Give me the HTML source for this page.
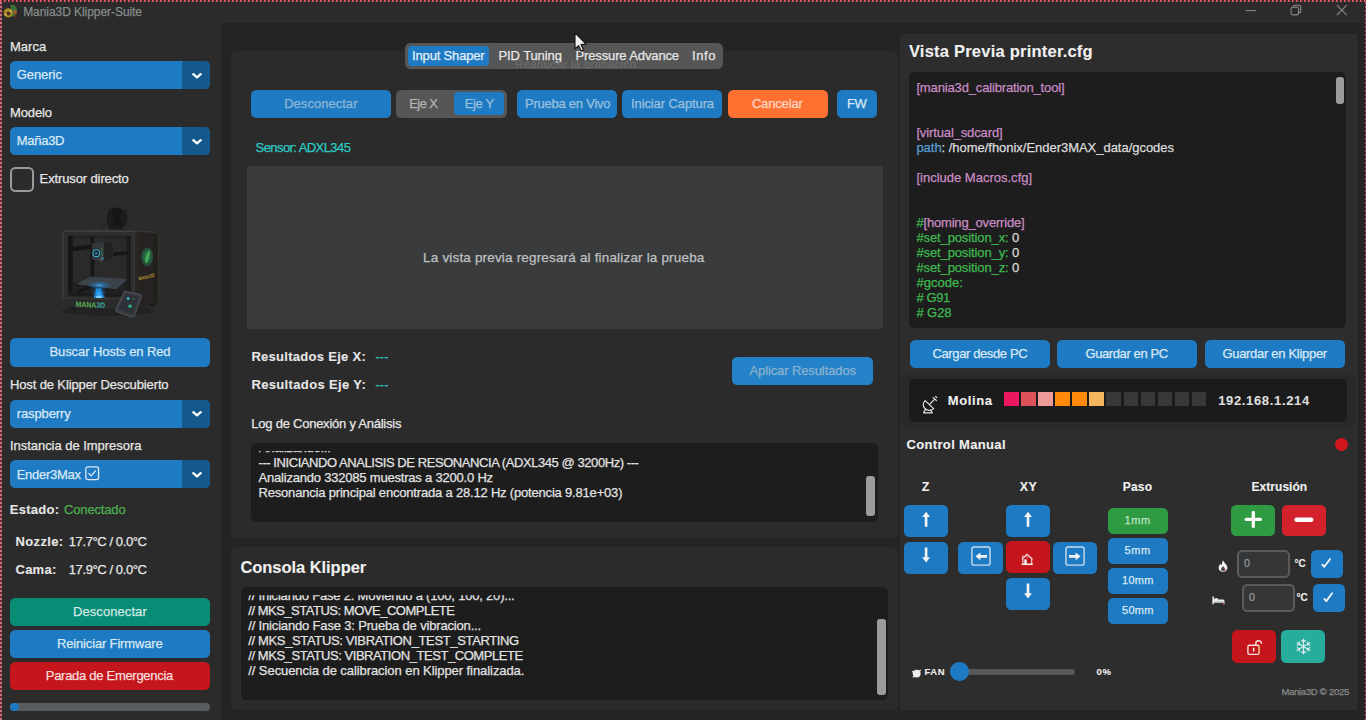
<!DOCTYPE html>
<html lang="es"><head><meta charset="utf-8"><title>Mania3D Klipper-Suite</title>
<style>
html,body{margin:0;padding:0;}
body{width:1366px;height:720px;overflow:hidden;background:#2b2b2b;position:relative;font-family:"Liberation Sans",sans-serif;}
.b{position:absolute;}
.t{position:absolute;white-space:nowrap;line-height:20px;height:20px;}
svg{position:absolute;overflow:visible;}
.t{-webkit-text-stroke:0.25px currentColor;}
</style></head><body>
<div class="b" style="left:222px;top:22.5px;width:1144px;height:697.5px;background:#242424;"></div>
<div class="b" style="left:231px;top:51px;width:667px;height:487px;background:#2b2b2b;border-radius:5.3px;"></div>
<div class="b" style="left:231px;top:547px;width:667px;height:163px;background:#2b2b2b;border-radius:5.3px;"></div>
<div class="b" style="left:899.5px;top:33.5px;width:458px;height:676.5px;background:#2d2d2d;border-radius:4px;"></div>
<div class="b" style="left:10px;top:61px;width:200px;height:28px;background:#1e7bc3;border-radius:5.3px;"></div>
<div class="b" style="left:182px;top:61px;width:28px;height:28px;background:#14598c;border-radius:0 6px 6px 0;"></div>
<div class="b" style="left:10px;top:127px;width:200px;height:28px;background:#1e7bc3;border-radius:5.3px;"></div>
<div class="b" style="left:182px;top:127px;width:28px;height:28px;background:#14598c;border-radius:0 6px 6px 0;"></div>
<div class="b" style="left:10px;top:167px;width:24px;height:25px;background:transparent;border-radius:5.3px;box-sizing:border-box;border:2.5px solid #9a9a9a;"></div>
<div class="b" style="left:10px;top:338px;width:200px;height:28.5px;background:#1e7bc3;border-radius:5.3px;"></div>
<div class="b" style="left:10px;top:400px;width:200px;height:27.5px;background:#1e7bc3;border-radius:5.3px;"></div>
<div class="b" style="left:182px;top:400px;width:28px;height:27.5px;background:#14598c;border-radius:0 6px 6px 0;"></div>
<div class="b" style="left:10px;top:460.4px;width:200px;height:27.8px;background:#1e7bc3;border-radius:5.3px;"></div>
<div class="b" style="left:182px;top:460.4px;width:28px;height:27.8px;background:#14598c;border-radius:0 6px 6px 0;"></div>
<div class="b" style="left:10px;top:598px;width:200px;height:28px;background:#088c76;border-radius:5.3px;"></div>
<div class="b" style="left:10px;top:629.7px;width:200px;height:28px;background:#1e7bc3;border-radius:5.3px;"></div>
<div class="b" style="left:10px;top:661.6px;width:200px;height:28.1px;background:#c4161c;border-radius:5.3px;"></div>
<div class="b" style="left:10px;top:703px;width:200px;height:8.2px;background:#595c5e;border-radius:4px;"></div>
<div class="b" style="left:10px;top:703px;width:8.7px;height:8.2px;background:#1e7bc3;border-radius:4px;"></div>
<div class="b" style="left:405.4px;top:43.3px;width:317.2px;height:25.7px;background:#565656;border-radius:5.3px;"></div>
<div class="b" style="left:408px;top:45.8px;width:80.7px;height:20.2px;background:#1e7bc3;border-radius:4px;"></div>
<div class="b" style="left:251px;top:90px;width:140.3px;height:28px;background:#1e7bc3;border-radius:5.3px;"></div>
<div class="b" style="left:396px;top:90px;width:110.7px;height:28px;background:#565656;border-radius:5.3px;"></div>
<div class="b" style="left:454px;top:92.4px;width:50px;height:23px;background:#1e7bc3;border-radius:4px;"></div>
<div class="b" style="left:517.3px;top:90px;width:100.1px;height:28px;background:#1e7bc3;border-radius:5.3px;"></div>
<div class="b" style="left:622px;top:90px;width:100.3px;height:28px;background:#1e7bc3;border-radius:5.3px;"></div>
<div class="b" style="left:727.5px;top:90px;width:100.2px;height:28px;background:#ff7031;border-radius:5.3px;"></div>
<div class="b" style="left:837.4px;top:90px;width:40.1px;height:28px;background:#1e7bc3;border-radius:5.3px;"></div>
<div class="b" style="left:246.7px;top:166.4px;width:636.3px;height:162.3px;background:#3a3b3c;border-radius:3px;"></div>
<div class="b" style="left:732.4px;top:357.1px;width:140.2px;height:28.1px;background:#2382c8;border-radius:5.3px;"></div>
<div class="b" style="left:251px;top:442.5px;width:626.5px;height:79.5px;background:#1d1d1d;border-radius:5.3px;"></div>
<div class="b" style="left:866px;top:476.3px;width:8.8px;height:40px;background:#9c9c9c;border-radius:3px;"></div>
<div class="b" style="left:240.5px;top:587px;width:647.8px;height:113px;background:#1d1d1d;border-radius:5.3px;"></div>
<div class="b" style="left:877.2px;top:619px;width:8.4px;height:76px;background:#9c9c9c;border-radius:3px;"></div>
<div class="b" style="left:909.3px;top:71.8px;width:436.7px;height:256.2px;background:#1d1d1d;border-radius:5.3px;"></div>
<div class="b" style="left:1335.7px;top:76.7px;width:8.3px;height:27.3px;background:#9c9c9c;border-radius:3px;"></div>
<div class="b" style="left:909.6px;top:340.2px;width:140.6px;height:28.1px;background:#1e7bc3;border-radius:5.3px;"></div>
<div class="b" style="left:1056.5px;top:340.2px;width:140.3px;height:28.1px;background:#1e7bc3;border-radius:5.3px;"></div>
<div class="b" style="left:1204.5px;top:340.2px;width:140.3px;height:28.1px;background:#1e7bc3;border-radius:5.3px;"></div>
<div class="b" style="left:901px;top:373.8px;width:455px;height:53.5px;background:#292929;border-radius:5px;"></div>
<div class="b" style="left:908.8px;top:378.6px;width:438px;height:43.8px;background:#1b1b1b;border-radius:5.3px;"></div>
<div class="b" style="left:1004.3px;top:392.4px;width:14.3px;height:14.1px;background:#ec1761;"></div>
<div class="b" style="left:1021.33px;top:392.4px;width:14.3px;height:14.1px;background:#dd5259;"></div>
<div class="b" style="left:1038.36px;top:392.4px;width:14.3px;height:14.1px;background:#ee9a98;"></div>
<div class="b" style="left:1055.39px;top:392.4px;width:14.3px;height:14.1px;background:#ff8a0a;"></div>
<div class="b" style="left:1072.42px;top:392.4px;width:14.3px;height:14.1px;background:#ff8a0a;"></div>
<div class="b" style="left:1089.45px;top:392.4px;width:14.3px;height:14.1px;background:#f3b55e;"></div>
<div class="b" style="left:1106.48px;top:392.4px;width:14.3px;height:14.1px;background:#383838;"></div>
<div class="b" style="left:1123.51px;top:392.4px;width:14.3px;height:14.1px;background:#383838;"></div>
<div class="b" style="left:1140.54px;top:392.4px;width:14.3px;height:14.1px;background:#383838;"></div>
<div class="b" style="left:1157.57px;top:392.4px;width:14.3px;height:14.1px;background:#383838;"></div>
<div class="b" style="left:1174.6px;top:392.4px;width:14.3px;height:14.1px;background:#383838;"></div>
<div class="b" style="left:1191.63px;top:392.4px;width:14.3px;height:14.1px;background:#383838;"></div>
<div class="b" style="left:904px;top:505.4px;width:44px;height:32px;background:#1e7bc3;border-radius:5.3px;"></div>
<div class="b" style="left:904px;top:541.7px;width:44px;height:32.3px;background:#1e7bc3;border-radius:5.3px;"></div>
<div class="b" style="left:1005.8px;top:505.4px;width:44.4px;height:32px;background:#1e7bc3;border-radius:5.3px;"></div>
<div class="b" style="left:958.3px;top:541.7px;width:44.4px;height:32.3px;background:#1e7bc3;border-radius:5.3px;"></div>
<div class="b" style="left:1006.2px;top:541.3px;width:44.2px;height:32.2px;background:#c4161c;border-radius:5.3px;"></div>
<div class="b" style="left:1052.5px;top:541.7px;width:44.3px;height:32.3px;background:#1e7bc3;border-radius:5.3px;"></div>
<div class="b" style="left:1005.8px;top:577.5px;width:44.4px;height:32.1px;background:#1e7bc3;border-radius:5.3px;"></div>
<div class="b" style="left:1107.5px;top:507.5px;width:60.8px;height:26.3px;background:#2e9a41;border-radius:5.3px;"></div>
<div class="b" style="left:1107.5px;top:537.5px;width:60.8px;height:26px;background:#1e7bc3;border-radius:5.3px;"></div>
<div class="b" style="left:1107.5px;top:567.5px;width:60.8px;height:26.3px;background:#1e7bc3;border-radius:5.3px;"></div>
<div class="b" style="left:1107.5px;top:597.5px;width:60.8px;height:26.3px;background:#1e7bc3;border-radius:5.3px;"></div>
<div class="b" style="left:1230.8px;top:504.5px;width:44.2px;height:31.8px;background:#2e9a41;border-radius:5.3px;"></div>
<div class="b" style="left:1282px;top:504.5px;width:44.3px;height:31.8px;background:#d3222b;border-radius:5.3px;"></div>
<div class="b" style="left:1236.8px;top:550px;width:53.7px;height:27.5px;background:#353637;border-radius:5.3px;box-sizing:border-box;border:2px solid #5b5b5b;"></div>
<div class="b" style="left:1241.8px;top:584.3px;width:53.7px;height:27.5px;background:#353637;border-radius:5.3px;box-sizing:border-box;border:2px solid #5b5b5b;"></div>
<div class="b" style="left:1310.5px;top:549.5px;width:32px;height:28px;background:#1e7bc3;border-radius:5.3px;"></div>
<div class="b" style="left:1312.5px;top:583.8px;width:32px;height:28px;background:#1e7bc3;border-radius:5.3px;"></div>
<div class="b" style="left:1232.2px;top:630.3px;width:43.8px;height:32.7px;background:#c4161c;border-radius:5.3px;"></div>
<div class="b" style="left:1280.5px;top:630.3px;width:44.5px;height:32.7px;background:#26ad9c;border-radius:5.3px;"></div>
<div class="b" style="left:959px;top:668.9px;width:115.7px;height:6px;background:#56595b;border-radius:3px;"></div>
<div class="t" id="t0" style="left:23.2px;top:2px;font-size:12px;color:#858c8a;letter-spacing:-0.060px;">Mania3D Klipper-Suite</div>
<div class="t" id="t1" style="left:9.9px;top:37px;font-size:13px;color:#e6e6e6;letter-spacing:0.055px;">Marca</div>
<div class="t" id="t2" style="left:16.7px;top:65px;font-size:13px;color:#d9e8f4;letter-spacing:-0.047px;">Generic</div>
<div class="t" id="t3" style="left:9.9px;top:103px;font-size:13px;color:#e6e6e6;letter-spacing:-0.090px;">Modelo</div>
<div class="t" id="t4" style="left:16.7px;top:131px;font-size:13px;color:#d9e8f4;letter-spacing:-0.265px;">Maña3D</div>
<div class="t" id="t5" style="left:39.6px;top:169px;font-size:13px;color:#e6e6e6;letter-spacing:-0.122px;">Extrusor directo</div>
<div class="t" id="t6" style="left:49.5px;top:342px;font-size:13px;color:#d9e8f4;letter-spacing:-0.097px;">Buscar Hosts en Red</div>
<div class="t" id="t7" style="left:9.9px;top:375px;font-size:13px;color:#e6e6e6;letter-spacing:-0.121px;">Host de Klipper Descubierto</div>
<div class="t" id="t8" style="left:16.7px;top:404px;font-size:13px;color:#d9e8f4;letter-spacing:-0.114px;">raspberry</div>
<div class="t" id="t9" style="left:9.9px;top:436px;font-size:13px;color:#e6e6e6;letter-spacing:-0.029px;">Instancia de Impresora</div>
<div class="t" id="t10" style="left:16.7px;top:465px;font-size:13px;color:#d9e8f4;letter-spacing:-0.265px;">Ender3Max</div>
<div class="t" id="t11" style="left:9.7px;top:500px;font-size:13px;color:#e6e6e6;font-weight:700;-webkit-text-stroke-width:0.1px;letter-spacing:0.304px;">Estado:</div>
<div class="t" id="t12" style="left:64px;top:500px;font-size:13px;color:#4caf50;letter-spacing:-0.155px;">Conectado</div>
<div class="t" id="t13" style="left:15.5px;top:532px;font-size:13px;color:#e6e6e6;font-weight:700;-webkit-text-stroke-width:0.1px;letter-spacing:0.357px;">Nozzle:</div>
<div class="t" id="t14" style="left:68.8px;top:532px;font-size:13px;color:#e6e6e6;letter-spacing:-0.406px;">17.7°C / 0.0°C</div>
<div class="t" id="t15" style="left:15.5px;top:560px;font-size:13px;color:#e6e6e6;font-weight:700;-webkit-text-stroke-width:0.1px;letter-spacing:0.250px;">Cama:</div>
<div class="t" id="t16" style="left:68.8px;top:560px;font-size:13px;color:#e6e6e6;letter-spacing:-0.406px;">17.9°C / 0.0°C</div>
<div class="t" id="t17" style="left:73px;top:602px;font-size:13px;color:#cfe9e3;letter-spacing:0.074px;">Desconectar</div>
<div class="t" id="t18" style="left:57px;top:634px;font-size:13px;color:#d9e8f4;letter-spacing:-0.159px;">Reiniciar Firmware</div>
<div class="t" id="t19" style="left:45.8px;top:666px;font-size:13px;color:#f7dede;letter-spacing:-0.289px;">Parada de Emergencia</div>
<div class="t" id="t20" style="left:412.1px;top:46px;font-size:13px;color:#e4eef6;letter-spacing:-0.171px;">Input Shaper</div>
<div class="t" id="t21" style="left:498.5px;top:46px;font-size:13px;color:#e6e6e6;letter-spacing:-0.103px;">PID Tuning</div>
<div class="t" id="t22" style="left:575.4px;top:46px;font-size:13px;color:#e6e6e6;letter-spacing:-0.120px;">Pressure Advance</div>
<div class="t" id="t23" style="left:692.1px;top:46px;font-size:13px;color:#e6e6e6;letter-spacing:0.578px;">Info</div>
<div class="t" id="t24" style="left:515.1px;top:54px;font-size:11.5px;color:#6c6c6c;letter-spacing:0.240px;clip-path:inset(0 0 5px 0);">Reanudar la grabación</div>
<div class="t" id="t25" style="left:284.2px;top:94px;font-size:13px;color:#8db6d6;letter-spacing:0.029px;">Desconectar</div>
<div class="t" id="t26" style="left:409.2px;top:94px;font-size:13px;color:#b4b4b4;letter-spacing:-0.556px;">Eje X</div>
<div class="t" id="t27" style="left:464.7px;top:94px;font-size:13px;color:#9cc0dd;letter-spacing:-0.349px;">Eje Y</div>
<div class="t" id="t28" style="left:525px;top:94px;font-size:13px;color:#9cc0dd;letter-spacing:-0.241px;">Prueba en Vivo</div>
<div class="t" id="t29" style="left:631px;top:94px;font-size:13px;color:#9cc0dd;letter-spacing:-0.103px;">Iniciar Captura</div>
<div class="t" id="t30" style="left:751.9px;top:94px;font-size:13px;color:#ffd8c6;letter-spacing:-0.154px;">Cancelar</div>
<div class="t" id="t31" style="left:847.1px;top:94px;font-size:13px;color:#d9e8f4;letter-spacing:-0.509px;">FW</div>
<div class="t" id="t32" style="left:255.6px;top:138px;font-size:13px;color:#2bcbc6;letter-spacing:-0.577px;">Sensor: ADXL345</div>
<div class="t" id="t33" style="left:423.1px;top:248px;font-size:13.5px;color:#bfc1c3;letter-spacing:0.172px;">La vista previa regresará al finalizar la prueba</div>
<div class="t" id="t34" style="left:251.4px;top:347px;font-size:13px;color:#e6e6e6;font-weight:700;-webkit-text-stroke-width:0.1px;letter-spacing:0.288px;">Resultados Eje X:</div>
<div class="t" id="t35" style="left:375.5px;top:347px;font-size:12px;color:#2bcbc6;letter-spacing:0.333px;">---</div>
<div class="t" id="t36" style="left:251.4px;top:375px;font-size:13px;color:#e6e6e6;font-weight:700;-webkit-text-stroke-width:0.1px;letter-spacing:0.358px;">Resultados Eje Y:</div>
<div class="t" id="t37" style="left:375.5px;top:375px;font-size:12px;color:#2bcbc6;letter-spacing:0.333px;">---</div>
<div class="t" id="t38" style="left:749.5px;top:361px;font-size:13px;color:#8db2cf;letter-spacing:-0.111px;">Aplicar Resultados</div>
<div class="t" id="t39" style="left:251.3px;top:414px;font-size:13px;color:#e6e6e6;letter-spacing:-0.239px;">Log de Conexión y Análisis</div>
<div class="t" id="t40" style="left:258.8px;top:438px;font-size:13px;color:#e2e2e2;letter-spacing:-0.267px;clip-path:inset(13px 0 0 0);">Analizando...</div>
<div class="t" id="t41" style="left:258.5px;top:453px;font-size:13px;color:#e2e2e2;letter-spacing:-0.432px;">--- INICIANDO ANALISIS DE RESONANCIA (ADXL345 @ 3200Hz) ---</div>
<div class="t" id="t42" style="left:258.5px;top:468px;font-size:13px;color:#e2e2e2;letter-spacing:-0.203px;">Analizando 332085 muestras a 3200.0 Hz</div>
<div class="t" id="t43" style="left:258.5px;top:483px;font-size:13px;color:#e2e2e2;letter-spacing:-0.188px;">Resonancia principal encontrada a 28.12 Hz (potencia 9.81e+03)</div>
<div class="t" id="t44" style="left:240.4px;top:557px;font-size:16.5px;color:#f0f0f0;font-weight:700;-webkit-text-stroke-width:0.1px;letter-spacing:-0.048px;">Consola Klipper</div>
<div class="t" id="t45" style="left:248.25px;top:586px;font-size:13px;color:#e2e2e2;letter-spacing:-0.200px;clip-path:inset(9.3px 0 0 0);">// Iniciando Fase 2: Moviendo a (100, 100, 20)...</div>
<div class="t" id="t46" style="left:248.25px;top:601px;font-size:13px;color:#e2e2e2;letter-spacing:-0.485px;">// MKS_STATUS: MOVE_COMPLETE</div>
<div class="t" id="t47" style="left:248.25px;top:616px;font-size:13px;color:#e2e2e2;letter-spacing:-0.167px;">// Iniciando Fase 3: Prueba de vibracion...</div>
<div class="t" id="t48" style="left:248.25px;top:631px;font-size:13px;color:#e2e2e2;letter-spacing:-0.355px;">// MKS_STATUS: VIBRATION_TEST_STARTING</div>
<div class="t" id="t49" style="left:248.25px;top:646px;font-size:13px;color:#e2e2e2;letter-spacing:-0.439px;">// MKS_STATUS: VIBRATION_TEST_COMPLETE</div>
<div class="t" id="t50" style="left:248.25px;top:661px;font-size:13px;color:#e2e2e2;letter-spacing:-0.072px;">// Secuencia de calibracion en Klipper finalizada.</div>
<div class="t" id="t51" style="left:908.9px;top:41px;font-size:16.5px;color:#f0f0f0;font-weight:700;-webkit-text-stroke-width:0.1px;letter-spacing:0.228px;">Vista Previa printer.cfg</div>
<div class="t" id="t52" style="left:916.4px;top:78px;font-size:13px;color:#c98cc4;letter-spacing:-0.142px;">[mania3d_calibration_tool]</div>
<div class="t" id="t53" style="left:916.4px;top:123px;font-size:13px;color:#c98cc4;letter-spacing:-0.129px;">[virtual_sdcard]</div>
<div class="t" id="t54" style="left:916.4px;top:138px;font-size:13px;color:#dcdcdc;letter-spacing:-0.029px;"><span style="color:#5a9fd8">path</span>: /home/fhonix/Ender3MAX_data/gcodes</div>
<div class="t" id="t55" style="left:916.4px;top:168px;font-size:13px;color:#c98cc4;letter-spacing:0.005px;">[include Macros.cfg]</div>
<div class="t" id="t56" style="left:916.4px;top:213px;font-size:13px;color:#c98cc4;letter-spacing:-0.178px;"><span style="color:#3fb950">#</span>[homing_override]</div>
<div class="t" id="t57" style="left:916.4px;top:228px;font-size:13px;color:#3fb950;letter-spacing:-0.112px;">#set_position_x: <span style="color:#dcdcdc">0</span></div>
<div class="t" id="t58" style="left:916.4px;top:243px;font-size:13px;color:#3fb950;letter-spacing:-0.112px;">#set_position_y: <span style="color:#dcdcdc">0</span></div>
<div class="t" id="t59" style="left:916.4px;top:258px;font-size:13px;color:#3fb950;letter-spacing:-0.112px;">#set_position_z: <span style="color:#dcdcdc">0</span></div>
<div class="t" id="t60" style="left:916.4px;top:273px;font-size:13px;color:#3fb950;letter-spacing:0.048px;">#gcode:</div>
<div class="t" id="t61" style="left:916.4px;top:288px;font-size:13px;color:#3fb950;letter-spacing:-0.384px;"># G91</div>
<div class="t" id="t62" style="left:916.4px;top:303px;font-size:13px;color:#3fb950;letter-spacing:-0.064px;"># G28</div>
<div class="t" id="t63" style="left:932.5px;top:344px;font-size:13px;color:#d9e8f4;letter-spacing:-0.384px;">Cargar desde PC</div>
<div class="t" id="t64" style="left:1085.5px;top:344px;font-size:13px;color:#d9e8f4;letter-spacing:-0.403px;">Guardar en PC</div>
<div class="t" id="t65" style="left:1222.4px;top:344px;font-size:13px;color:#d9e8f4;letter-spacing:-0.297px;">Guardar en Klipper</div>
<div class="t" id="t66" style="left:947.7px;top:391px;font-size:13px;color:#f0f0f0;font-weight:700;-webkit-text-stroke-width:0.1px;letter-spacing:0.621px;">Molina</div>
<div class="t" id="t67" style="left:1218.2px;top:391px;font-size:13px;color:#dedede;font-weight:700;-webkit-text-stroke-width:0.1px;letter-spacing:0.651px;">192.168.1.214</div>
<div class="t" id="t68" style="left:906.5px;top:435px;font-size:13px;color:#f0f0f0;font-weight:700;-webkit-text-stroke-width:0.1px;letter-spacing:0.342px;">Control Manual</div>
<div class="t" id="t69" style="left:921.7px;top:477px;font-size:12.5px;color:#f0f0f0;font-weight:700;-webkit-text-stroke-width:0.1px;">Z</div>
<div class="t" id="t70" style="left:1019.7px;top:477px;font-size:12.5px;color:#f0f0f0;font-weight:700;-webkit-text-stroke-width:0.1px;letter-spacing:0.356px;">XY</div>
<div class="t" id="t71" style="left:1122.75px;top:477px;font-size:12px;color:#f0f0f0;font-weight:700;-webkit-text-stroke-width:0.1px;letter-spacing:0.203px;">Paso</div>
<div class="t" id="t72" style="left:1251.5px;top:477px;font-size:12px;color:#f0f0f0;font-weight:700;-webkit-text-stroke-width:0.1px;letter-spacing:0.045px;">Extrusión</div>
<div class="t" id="t73" style="left:1124.5px;top:510px;font-size:11px;color:#bfe3c6;letter-spacing:0.616px;">1mm</div>
<div class="t" id="t74" style="left:1124.5px;top:540px;font-size:11px;color:#d9e8f4;letter-spacing:0.616px;">5mm</div>
<div class="t" id="t75" style="left:1122px;top:570px;font-size:11px;color:#d9e8f4;letter-spacing:0.297px;">10mm</div>
<div class="t" id="t76" style="left:1122px;top:600px;font-size:11px;color:#d9e8f4;letter-spacing:0.297px;">50mm</div>
<div class="t" id="t77" style="left:1243.9px;top:553px;font-size:10.8px;color:#999999;">0</div>
<div class="t" id="t78" style="left:1248.9px;top:587px;font-size:10.8px;color:#999999;">0</div>
<div class="t" id="t79" style="left:1294.5px;top:554px;font-size:10px;color:#ececec;font-weight:700;-webkit-text-stroke-width:0.1px;letter-spacing:-0.117px;">°C</div>
<div class="t" id="t80" style="left:1296.5px;top:588px;font-size:10px;color:#ececec;font-weight:700;-webkit-text-stroke-width:0.1px;letter-spacing:-0.117px;">°C</div>
<div class="t" id="t81" style="left:924.4px;top:662px;font-size:9.5px;color:#f0f0f0;font-weight:700;-webkit-text-stroke-width:0.1px;letter-spacing:0.567px;">FAN</div>
<div class="t" id="t82" style="left:1096.5px;top:662px;font-size:9.5px;color:#f0f0f0;font-weight:700;-webkit-text-stroke-width:0.1px;letter-spacing:0.783px;">0%</div>
<div class="t" id="t83" style="left:1281.4px;top:682px;font-size:9.5px;color:#8a8a8a;letter-spacing:-0.281px;">Mania3D © 2025</div>
<svg style="left:190px;top:70.5px" width="14" height="10" viewBox="0 0 14 10"><path d="M3.3 3.2 L7 6.3 L10.7 3.2" fill="none" stroke="#fff" stroke-width="2.4" stroke-linecap="round" stroke-linejoin="round"/></svg>
<svg style="left:190px;top:136.5px" width="14" height="10" viewBox="0 0 14 10"><path d="M3.3 3.2 L7 6.3 L10.7 3.2" fill="none" stroke="#fff" stroke-width="2.4" stroke-linecap="round" stroke-linejoin="round"/></svg>
<svg style="left:190px;top:409.25px" width="14" height="10" viewBox="0 0 14 10"><path d="M3.3 3.2 L7 6.3 L10.7 3.2" fill="none" stroke="#fff" stroke-width="2.4" stroke-linecap="round" stroke-linejoin="round"/></svg>
<svg style="left:190px;top:469.8px" width="14" height="10" viewBox="0 0 14 10"><path d="M3.3 3.2 L7 6.3 L10.7 3.2" fill="none" stroke="#fff" stroke-width="2.4" stroke-linecap="round" stroke-linejoin="round"/></svg>
<svg style="left:84.6px;top:466.4px" width="14.4" height="14.4" viewBox="0 0 14 14"><rect x="0.8" y="0.8" width="12.4" height="12.4" rx="2" fill="none" stroke="#d9e8f4" stroke-width="1.3"/><path d="M3.5 7 L6 9.6 L10.6 4.2" fill="none" stroke="#d9e8f4" stroke-width="1.3"/></svg>
<div class="b" style="left:1335px;top:438.3px;width:13px;height:13px;border-radius:50%;background:#d3151c"></div>
<svg style="left:0;top:0" width="1366" height="720"><path d="M926.1 511.7 L930 516.9 L927.4 516.9 L927.4 526.7 L924.8 526.7 L924.8 516.9 L922.2 516.9 Z" fill="#f4f4f4"/></svg>
<svg style="left:0;top:0" width="1366" height="720"><path d="M926.1 562.5 L930 557.3 L927.4 557.3 L927.4 547.4 L924.8 547.4 L924.8 557.3 L922.2 557.3 Z" fill="#f4f4f4"/></svg>
<svg style="left:0;top:0" width="1366" height="720"><path d="M1028 511.7 L1031.9 516.9 L1029.3 516.9 L1029.3 526.7 L1026.7 526.7 L1026.7 516.9 L1024.1 516.9 Z" fill="#f4f4f4"/></svg>
<svg style="left:0;top:0" width="1366" height="720"><path d="M1028 598.5 L1031.9 593.3 L1029.3 593.3 L1029.3 583.4 L1026.7 583.4 L1026.7 593.3 L1024.1 593.3 Z" fill="#f4f4f4"/></svg>
<svg style="left:0;top:0" width="1366" height="720"><rect x="971.9" y="547" width="18.1" height="18.1" rx="2.2" fill="none" stroke="#c9dcec" stroke-width="1.4"/><path d="M975.4 556.35 L980.4 552.55 L980.4 555.05 L987 555.05 L987 557.65 L980.4 557.65 L980.4 560.15 Z" fill="#f4f4f4"/></svg>
<svg style="left:0;top:0" width="1366" height="720"><rect x="1066" y="547" width="18.1" height="18.1" rx="2.2" fill="none" stroke="#c9dcec" stroke-width="1.4"/><path d="M1080.6 556.35 L1075.6 552.55 L1075.6 555.05 L1069 555.05 L1069 557.65 L1075.6 557.65 L1075.6 560.15 Z" fill="#f4f4f4"/></svg>
<svg style="left:1021.4px;top:552.6px" width="12.4" height="12.4" viewBox="0 0 12.4 12.4"><path d="M0.9 6.3 L6 1.2 L11.5 6.3" fill="none" stroke="#f0d6d8" stroke-width="1.3" stroke-linejoin="round"/><path d="M2 2.2 V5" stroke="#e6b8c0" stroke-width="1.3"/><path d="M1.9 6 V11.2 H10.7 V6" fill="none" stroke="#ecdcdc" stroke-width="1.1"/><rect x="3.3" y="6.4" width="2.4" height="4.8" fill="#f6f2f2"/><rect x="7" y="7" width="2.2" height="2.2" fill="#a01218"/><path d="M0.6 11.4 H11.8" stroke="#f4f0f0" stroke-width="1.3"/><path d="M4 4.4 L6 2.6 L8.2 4.6 Z" fill="#d86a70"/></svg>
<svg style="left:0;top:0" width="1366" height="720"><path d="M1246.2 519.4 H1260.4 M1253.3 512.4 V526.4" stroke="#fbfbfb" stroke-width="3.3" fill="none" stroke-linecap="round"/></svg>
<svg style="left:0;top:0" width="1366" height="720"><path d="M1296.6 519.8 H1311.2" stroke="#fbfbfb" stroke-width="4.4" fill="none" stroke-linecap="round"/></svg>
<svg style="left:0;top:0" width="1366" height="720"><path d="M1322.3 564.6 L1324.3 566.8 L1330.1 559" stroke="#f6f6f6" stroke-width="1.8" fill="none" stroke-linecap="round" stroke-linejoin="round"/></svg>
<svg style="left:0;top:0" width="1366" height="720"><path d="M1324.3 598.9 L1326.3 601.1 L1332.1 593.3" stroke="#f6f6f6" stroke-width="1.8" fill="none" stroke-linecap="round" stroke-linejoin="round"/></svg>
<svg style="left:1217.5px;top:559.5px" width="10" height="12" viewBox="0 0 10 12"><path d="M5 0.3 C5.6 2.6 9.4 4.6 9.4 7.8 C9.4 10.2 7.4 11.8 5 11.8 C2.6 11.8 0.6 10.2 0.6 7.8 C0.6 6 1.8 4.8 2.6 3.6 C3 4.6 3.4 5 4 5.2 C3.8 3.4 4.2 1.6 5 0.3 Z" fill="#f2f2f2"/><path d="M5 6 C5.6 7.2 7 7.8 7 9.3 C7 10.4 6.1 11.1 5 11.1 C3.9 11.1 3 10.4 3 9.3 C3 8 4.4 7.4 5 6 Z" fill="#4a4a4a"/><path d="M6.6 8.4 C7.6 8.8 7.6 10.6 6.4 11" stroke="#d8474a" stroke-width="1" fill="none"/></svg>
<svg style="left:1212px;top:596.4px" width="13" height="9" viewBox="0 0 13 9"><path d="M0.4 0.4 H1.9 V3.2 L3 2.2 H6 V3.4 H11 Q12.5 3.6 12.5 5.2 V8.2 H11.2 V6.8 H1.9 V8.2 H0.4 Z" fill="#ededed"/><path d="M2.2 5.8 H11.4" stroke="#9aa6b4" stroke-width="0.8"/><rect x="10.8" y="6.6" width="1.6" height="1.5" fill="#d05a5a"/></svg>
<svg style="left:1245.6px;top:639.4px" width="17" height="17" viewBox="0 0 17 17"><rect x="1.9" y="6.2" width="11.2" height="9.2" rx="1.6" fill="none" stroke="#f4dede" stroke-width="1.4"/><path d="M9.8 6 V4.2 C9.8 0.9 15.4 0.9 15.4 4.2" fill="none" stroke="#f4dede" stroke-width="1.4" stroke-linecap="round"/><path d="M13.2 7.4 V14.4" stroke="#f0a23a" stroke-width="1"/><rect x="6.9" y="8.6" width="1.5" height="4" rx="0.7" fill="#fdf6ec"/></svg>
<svg style="left:1294.5px;top:638px" width="17" height="17" viewBox="0 0 17 17"><g stroke="#dde9ee" stroke-width="1.15" fill="none" stroke-linecap="round"><path d="M8.5 1 V16 M2 4.75 L15 12.25 M2 12.25 L15 4.75"/><path d="M6.5 2.3 L8.5 4 L10.5 2.3 M6.5 14.7 L8.5 13 L10.5 14.7 M2.2 7.3 L4.6 6.3 L4.2 3.8 M14.8 9.7 L12.4 10.7 L12.8 13.2 M2.2 9.7 L4.6 10.7 L4.2 13.2 M14.8 7.3 L12.4 6.3 L12.8 3.8"/></g></svg>
<svg style="left:910.5px;top:667.5px" width="11" height="11" viewBox="0 0 11 11"><circle cx="5.7" cy="5.6" r="3.9" fill="#ededed"/><path d="M1.2 3.2 L3 4.6 M2 9.4 L3.4 7.6 M9.8 2 L8 3.6" stroke="#ededed" stroke-width="1.4"/></svg>
<div class="b" style="left:950.4px;top:662.3px;width:18.6px;height:18.6px;border-radius:50%;background:#1e7bc3"></div>
<svg style="left:922px;top:395px" width="16" height="19" viewBox="0 0 16 19"><g stroke="#e2e2e2" stroke-width="1.25" fill="none" stroke-linejoin="round" stroke-linecap="round"><path d="M3.2 5.6 L11.6 13.6 C8.6 16.4 4.6 15.6 2.6 13.2 C0.8 10.8 1 7.6 3.2 5.6 Z"/><path d="M7.4 9.6 L12.4 4.4"/><path d="M11.2 2.4 L14.4 5.6 M13.6 1.4 L14.8 2.6"/><path d="M3.4 14.4 L1.6 17.8 H10.2 L8.8 15.4"/></g></svg>
<svg style="left:0;top:0" width="1366" height="720"><g stroke="#8a8a8a" stroke-width="1.1" fill="none"><path d="M1245.7 10.6 H1255.7"/><rect x="1291" y="7.3" width="7.6" height="7.6" rx="1.6"/><path d="M1293.3 7.2 V6.6 Q1293.3 5.3 1294.7 5.3 H1299.2 Q1300.7 5.3 1300.7 6.8 V11.3 Q1300.7 12.6 1299.4 12.6 H1298.8"/><path d="M1336.8 5.2 L1346.8 15.2 M1346.8 5.2 L1336.8 15.2"/></g></svg>
<svg style="left:2px;top:3px" width="17" height="17" viewBox="0 0 17 17"><path d="M8 2.2 Q12.5 0.8 14.6 4.6 Q15.6 8 13.6 11.6 Q11 14.6 8.6 13.6 Q10.6 8 8 2.2 Z" fill="#3e7a38" opacity="0.9"/><circle cx="6.2" cy="9.8" r="4.6" fill="#b08a22"/><circle cx="6.6" cy="10.4" r="2" fill="#4a3424"/><circle cx="13.2" cy="9" r="1.9" fill="#b4572a" opacity="0.9"/><circle cx="13.6" cy="13.4" r="1.6" fill="#6a2a22" opacity="0.9"/><circle cx="8.6" cy="8.2" r="0.8" fill="#f0e6c0"/><circle cx="3.6" cy="11.8" r="0.7" fill="#f0e6c0"/></svg>
<div class="b" style="left:0;top:0;width:1366px;height:2px;background:repeating-linear-gradient(90deg,#d06a78 0 1px,#c3323e 1px 2.4px,#3d2a2d 2.4px 4px)"></div>
<div class="b" style="left:0;top:2px;width:2px;height:718px;background:repeating-linear-gradient(180deg,#c9727e 0 2.2px,#6b3141 2.2px 4px)"></div>
<div class="b" style="left:1364.6px;top:2px;width:1.4px;height:718px;background:repeating-linear-gradient(180deg,#c25a6c 0 2.2px,#5a2d3a 2.2px 4px)"></div>
<svg style="left:573.8px;top:31.7px" width="15" height="21.4" viewBox="0 0 14 20"><path d="M0.9 0.8 L0.9 15.8 L4.3 12.8 L6.7 17.9 L8.9 16.9 L6.5 11.8 L11.3 11.3 Z" fill="#eef0f1" stroke="#141414" stroke-width="1.1" stroke-linejoin="round"/></svg>
<svg style="left:55px;top:200px" width="110" height="130" viewBox="55 200 110 130">
<defs>
<radialGradient id="glow" cx="0.5" cy="0.5" r="0.5"><stop offset="0" stop-color="#3fb4ff" stop-opacity="0.95"/><stop offset="0.55" stop-color="#1d7fd0" stop-opacity="0.5"/><stop offset="1" stop-color="#1d7fd0" stop-opacity="0"/></radialGradient>
<radialGradient id="logo" cx="0.5" cy="0.5" r="0.5"><stop offset="0" stop-color="#2f8a4a"/><stop offset="0.65" stop-color="#24603a"/><stop offset="1" stop-color="#24603a" stop-opacity="0"/></radialGradient>
<linearGradient id="side" x1="0" y1="0" x2="1" y2="0"><stop offset="0" stop-color="#2a2624"/><stop offset="1" stop-color="#231f1e"/></linearGradient>
<filter id="blur1"><feGaussianBlur stdDeviation="0.55"/></filter>
</defs>
<g filter="url(#blur1)">
<ellipse cx="108" cy="311" rx="46" ry="5" fill="#242424"/>
<!-- spool -->
<ellipse cx="116.5" cy="219" rx="9.5" ry="11.5" fill="#151515"/>
<ellipse cx="124" cy="218" rx="3.4" ry="8.6" fill="#1e1e1e"/>
<ellipse cx="110.8" cy="219.5" rx="3" ry="11" fill="#1a1a1a"/>
<rect x="112" y="226" width="9" height="6" fill="#1b1b1b"/>
<path d="M109 222 Q99 226 99 242" stroke="#1a1a1a" stroke-width="0.8" fill="none"/>
<!-- side panel -->
<path d="M134 231 L155 232.5 Q158.5 233 158.5 237 L158.5 300 Q158.5 304.5 154 304.8 L134 308.5 Z" fill="url(#side)"/>
<path d="M134 231 L155 232.5 Q158.5 233 158.5 237 L158.5 300" stroke="#383533" stroke-width="0.9" fill="none"/>
<!-- frame outer front -->
<path d="M62.5 233 Q62.5 230.7 65 230.7 L134.5 231 L134.5 309 L65 307.5 Q62.5 307.3 62.5 305 Z" fill="#2d2d2d"/>
<path d="M63 305 L63 233 Q63 231.2 65 231.2 L134.5 231.5" fill="none" stroke="#444444" stroke-width="1"/>
<path d="M134.2 231 L134.2 309" stroke="#3e3e3e" stroke-width="1.2"/>
<!-- frame top face -->
<path d="M65 230.7 L134.5 231 L155 232.5 L150 231.2 L104 229.5 L72 229.6 Z" fill="#3a3a3a"/>
<!-- inner opening -->
<path d="M68.2 235.6 L130.8 236 L130.8 293.5 L68.2 292.5 Z" fill="#242424"/>
<path d="M72.4 238 L127 238.4 L127 280 L72.4 282 Z" fill="#2b2b2b"/>
<!-- rear posts / gantry -->
<rect x="68.2" y="235.6" width="4.4" height="57" fill="#171717"/>
<rect x="126.6" y="236" width="4.2" height="57.5" fill="#1a1a1a"/>
<rect x="90.5" y="236.4" width="3.6" height="44" fill="#171717"/>
<path d="M71 247.2 L92 244.6 L92 248.8 L71 251.6 Z" fill="#161616"/>
<path d="M112 252.6 L128 251.2 L128 254.6 L112 256.2 Z" fill="#181818"/>
<!-- toolhead -->
<path d="M92 243.8 L103 241 L112.8 243 L112.8 258.5 L104 261.2 L92 259.5 Z" fill="#36393b"/>
<path d="M104 241 L112.8 243 L112.8 258.5 L104 261.2 Z" fill="#202223"/>
<rect x="99.5" y="238" width="5.4" height="4.5" fill="#2c2e2e"/>
<circle cx="96.3" cy="253.2" r="4.4" fill="#15202a"/>
<circle cx="96.3" cy="253.2" r="3.4" fill="none" stroke="#46aec6" stroke-width="1.1"/>
<circle cx="96.3" cy="253.2" r="1.5" fill="#2b6f9a"/>
<path d="M99.6 257.2 L102 257.2 L101.2 262.4 L100.2 262.4 Z" fill="#4b4f52"/>
<circle cx="102.6" cy="258.4" r="0.9" fill="#3fa7e0"/>
<path d="M101.6 247.4 L102.2 256.6" stroke="#2d8a46" stroke-width="0.8"/>
<!-- bed -->
<path d="M75.8 284.2 L90.4 276.6 L127.4 279.3 L116.4 289.6 Z" fill="#3b434a"/>
<path d="M75.8 284.2 L116.4 289.6 L116.4 291.6 L75.8 286.2 Z" fill="#1c1f22"/>
<path d="M116.4 289.6 L127.4 279.3 L127.4 281.2 L116.4 291.6 Z" fill="#202326"/>
<ellipse cx="99.5" cy="285.4" rx="12" ry="4.4" fill="url(#glow)" opacity="0.85"/>
<!-- base floor -->
<path d="M68.2 292.5 L130.8 293.5 L130.8 297 L68.2 296 Z" fill="#1a1a1a"/>
<path d="M75 291 L88 286.6 L92 288 L80 293 Z" fill="#161616"/>
<!-- glow object -->
<path d="M93.6 297.8 Q96.5 293 95.6 288.6 L101.6 288.6 Q101 293.2 105 297.8 Z" fill="#1f8fe0"/>
<ellipse cx="98.8" cy="293.5" rx="7.5" ry="5.5" fill="url(#glow)"/>
<ellipse cx="98.8" cy="297" rx="3.2" ry="1.4" fill="#6fd0ff"/>
<!-- front bottom bar -->
<path d="M62.5 297.8 L134.5 299.2 L134.5 309 L65 307.5 Q62.5 307.3 62.5 305 Z" fill="#2b2b2b"/>
<path d="M63 298.2 L134 299.6" stroke="#3a3a3a" stroke-width="0.8"/>
<!-- side logo -->
<ellipse cx="147.2" cy="256.8" rx="5.8" ry="9.4" fill="url(#logo)"/>
<path d="M145 262 Q146 252 150 249.6 Q150.4 256.6 146.6 263.5 Z" fill="#49b45a" opacity="0.8"/>
<ellipse cx="147.2" cy="256.8" rx="5.2" ry="8.8" fill="none" stroke="#277a78" stroke-width="0.7" opacity="0.8"/>
<!-- screen -->
<path d="M124.6 291 L140.8 294.8 Q142 295.2 141.6 296.6 L134.4 316 Q133.8 317.6 132.2 317.2 L116.4 311.6 Q115 311 115.8 309.6 Z" fill="#393e43" stroke="#50555a" stroke-width="0.9"/>
<path d="M125.4 293.4 L139 296.6 L132.6 314 L118.4 309.4 Z" fill="#2e3337"/>
<circle cx="128.2" cy="298.4" r="1.5" fill="#35b6c8"/>
<circle cx="130" cy="306.2" r="1.6" fill="#2fc08e"/>
<rect x="132" y="298.4" width="3" height="1" fill="#4a6a4a" transform="rotate(14 133 299)"/>
<rect x="69" y="307.4" width="6" height="2.2" fill="#1c1c1c"/>
<rect x="150" y="303.8" width="5" height="2.4" fill="#1c1c1c"/>
</g>
<text x="75.6" y="306.8" font-family="'Liberation Sans',sans-serif" font-size="7.6" font-weight="700" fill="#55ae55" transform="rotate(2.2 75.6 306.8)" textLength="29.5" lengthAdjust="spacingAndGlyphs">MANA<tspan fill="#3aa89c">3D</tspan></text>
<text x="139" y="280.6" font-family="'Liberation Sans',sans-serif" font-size="5" font-weight="700" fill="#b8902f" transform="rotate(-14 139 280.6)" textLength="16.5" lengthAdjust="spacingAndGlyphs">MANA3D</text>
</svg>
</body></html>
